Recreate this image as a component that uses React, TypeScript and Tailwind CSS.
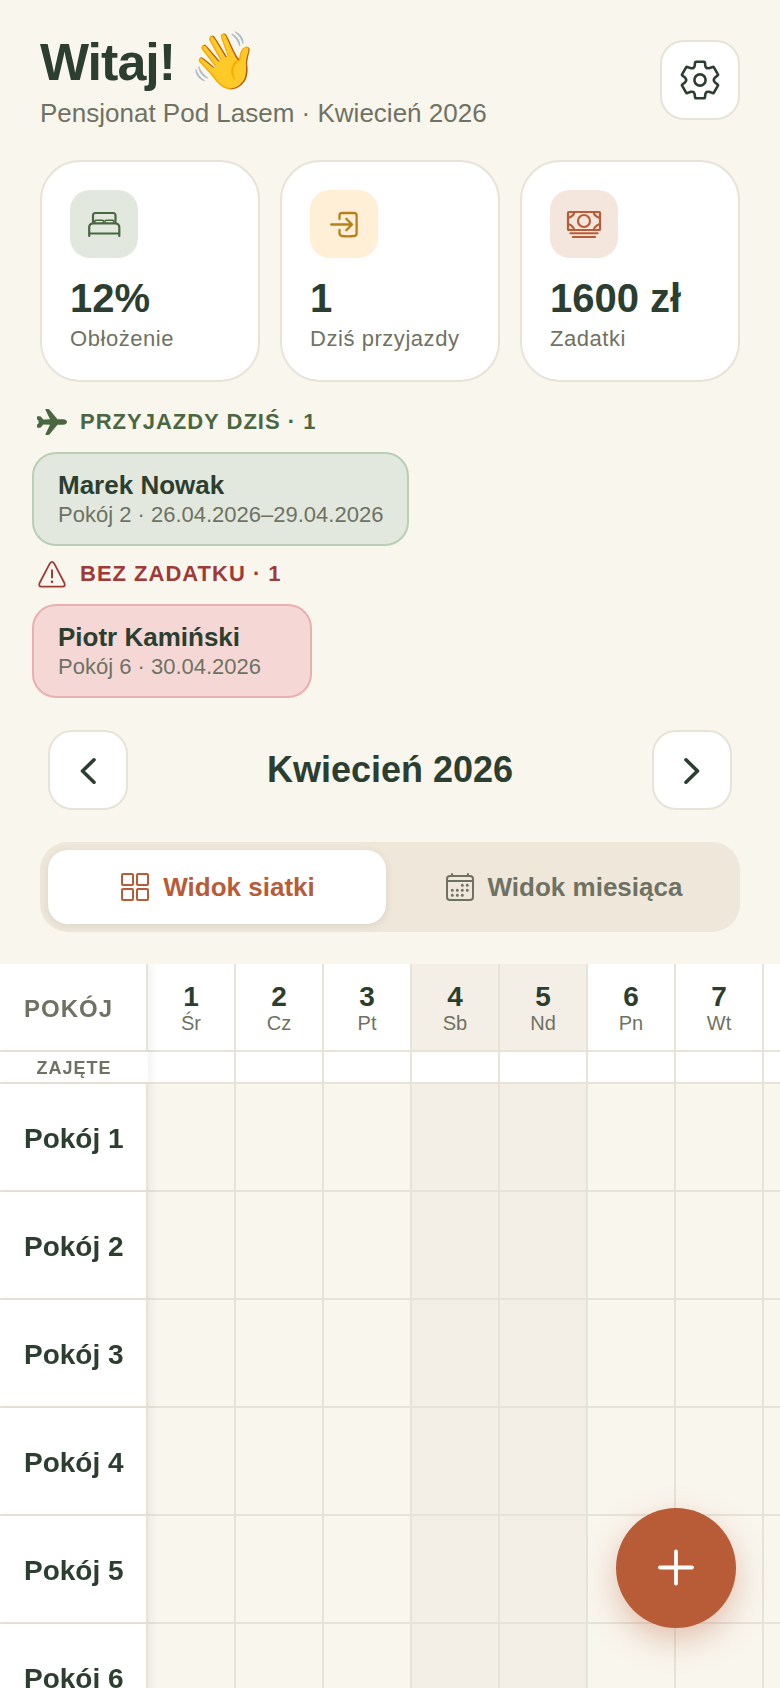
import { useState } from 'react'
import type { ReactNode } from 'react'

const weekdays = ['Nd', 'Pn', 'Wt', 'Śr', 'Cz', 'Pt', 'Sb']

// April 2026 starts on a Wednesday
const days = Array.from({ length: 30 }, (_, i) => {
  const weekday = (i + 3) % 7
  return { number: i + 1, name: weekdays[weekday], weekend: weekday === 0 || weekday === 6 }
})

const rooms = ['Pokój 1', 'Pokój 2', 'Pokój 3', 'Pokój 4', 'Pokój 5', 'Pokój 6']

function GearIcon() {
  return (
    <svg viewBox="-20 -20 40 40" className="size-10" fill="none" stroke="currentColor" strokeWidth="2.6" strokeLinejoin="round" aria-hidden="true">
      <path d="M-4-18.300H4Q4.800-18.300 4.900-17.500L5.400-14Q6-11.200 9-11.800L12.700-13Q13.500-13.300 13.900-12.600L17.900-5.700Q18.300-5 17.600-4.500L14.800-2.200Q12.800 0 14.800 2.200L17.600 4.500Q18.300 5 17.900 5.700L13.900 12.600Q13.500 13.300 12.700 13L9 11.800Q6 11.200 5.400 14L4.900 17.500Q4.800 18.300 4 18.300H-4Q-4.800 18.300-4.900 17.500L-5.400 14Q-6 11.200-9 11.800L-12.700 13Q-13.500 13.300-13.900 12.600L-17.900 5.700Q-18.300 5-17.600 4.500L-14.800 2.200Q-12.800 0-14.800-2.200L-17.600-4.500Q-18.300-5-17.900-5.700L-13.900-12.600Q-13.500-13.300-12.700-13L-9-11.800Q-6-11.200-5.400-14L-4.900-17.500Q-4.800-18.300-4-18.300Z" />
      <circle r="5.600" />
    </svg>
  )
}

function BedIcon() {
  return (
    <svg viewBox="0 0 68 68" className="size-full" fill="none" stroke="currentColor" strokeWidth="2.200" strokeLinecap="round" strokeLinejoin="round" aria-hidden="true">
      <path d="M23 33V25.500Q23 23 25.500 23H43Q45.500 23 45.500 25.500V33" />
      <path d="M19.200 46V37.500Q19.200 33.500 23.200 33.500H45.300Q49.300 33.500 49.300 37.500V46M19.200 43.500H49.300" />
      <rect x="24.800" y="30.300" width="8.700" height="3" rx="1" strokeWidth="1.600" />
      <rect x="35" y="30.300" width="8.700" height="3" rx="1" strokeWidth="1.600" />
    </svg>
  )
}

function ArrivalIcon() {
  return (
    <svg viewBox="0 0 68 68" className="size-full" fill="none" stroke="currentColor" strokeWidth="2.300" strokeLinecap="round" strokeLinejoin="round" aria-hidden="true">
      <path d="M29.500 29V25.500Q29.500 23 32 23H44Q46.600 23 46.600 25.500V43.500Q46.600 46 44 46 38 46.600 32 46 29.500 45.500 29.500 43V40" />
      <path d="M21.200 34.500H42M36.300 28.800 42 34.500 36.300 40.200" />
    </svg>
  )
}

function CashIcon() {
  return (
    <svg viewBox="0 0 68 68" className="size-full" fill="none" stroke="currentColor" strokeWidth="2.200" strokeLinecap="round" aria-hidden="true">
      <rect x="18" y="22" width="32" height="18" rx="0.800" />
      <circle cx="34" cy="31" r="6" />
      <path d="M24.500 22Q23.500 26.500 18 28M43.500 22Q44.500 26.500 50 28M18 34Q23 35.500 24.500 40M50 34Q45 35.500 43.500 40" />
      <path d="M20.300 43.300H47.700M22.800 47H45.200" strokeWidth="1.900" />
    </svg>
  )
}

function PlaneIcon() {
  return (
    <svg viewBox="0 0 32 32" className="size-8" fill="currentColor" aria-hidden="true">
      <path d="M10 3H12Q13 3 13.600 3.800L21.500 13.200H27Q31 13.700 31 16T27 18.800H21.500L13.600 28.200Q13 29 12 29H10Q9 29 9.400 28.200L14 18.800 7.300 18.600 5 21.300Q4.700 21.700 4 21.700H1.600Q1 21.700 1 21V19Q1 18.400 2.600 17.200V14.800Q1 13.600 1 13V11Q1 10.300 1.600 10.300H4Q4.700 10.300 5 10.700L7.300 13.400 14 13.200 9.400 3.800Q9 3 10 3Z" />
    </svg>
  )
}

function WarningIcon() {
  return (
    <svg viewBox="0 0 32 32" className="size-8" fill="none" stroke="currentColor" strokeWidth="1.800" strokeLinecap="round" strokeLinejoin="round" aria-hidden="true">
      <path d="M14 5.200Q16 2.500 18 5.200L28.400 25Q29.700 28.700 26.500 28.700H5.500Q2.300 28.700 3.600 25Z" />
      <path d="M16 12.200V19.600" strokeWidth="2" />
      <circle cx="16" cy="23.700" r="1.300" fill="currentColor" stroke="none" />
    </svg>
  )
}

function GridIcon() {
  return (
    <svg viewBox="0 0 32 32" className="size-8" fill="none" stroke="currentColor" strokeWidth="2" aria-hidden="true">
      <rect x="3" y="3" width="11" height="11" rx="1" />
      <rect x="18" y="3" width="11" height="11" rx="1" />
      <rect x="3" y="18" width="11" height="11" rx="1" />
      <rect x="18" y="18" width="11" height="11" rx="1" />
    </svg>
  )
}

function CalendarIcon() {
  return (
    <svg viewBox="0 0 32 32" className="size-8" fill="none" stroke="currentColor" strokeWidth="2" strokeLinecap="round" aria-hidden="true">
      <rect x="3" y="5" width="26" height="24" rx="3" />
      <path d="M3 10H29M8 3V5M24 3V5" />
      <path
        d="M18.300 14.300h.01M23.300 14.300h.01M8.300 19.300h.01M13.300 19.300h.01M18.300 19.300h.01M23.300 19.300h.01M8.300 24.300h.01M13.300 24.300h.01M18.300 24.300h.01"
        strokeWidth="3"
      />
    </svg>
  )
}

function ChevronIcon({ direction }: { direction: 'left' | 'right' }) {
  return (
    <svg viewBox="0 0 32 32" className="size-8" fill="none" stroke="currentColor" strokeWidth="3.600" strokeLinecap="round" strokeLinejoin="round" aria-hidden="true">
      <path d={direction === 'left' ? 'M22 5.800 10.500 17 22 28.200' : 'M10 5.800 21.500 17 10 28.200'} />
    </svg>
  )
}

function StatCard({ icon, iconClass, value, label }: { icon: ReactNode; iconClass: string; value: string; label: string }) {
  return (
    <div className="rounded-[40px] border-2 border-[#e7e3d8] bg-white p-7">
      <div className={`size-[68px] rounded-[20px] ${iconClass}`}>{icon}</div>
      <p className="mt-4 text-[40px] leading-12 font-bold whitespace-nowrap">{value}</p>
      <p className="mt-1 text-[22px] leading-[26px] tracking-wide whitespace-nowrap text-[#6f7263]">{label}</p>
    </div>
  )
}

function GuestSection({ icon, title, titleClass, guest, details, chipClass }: {
  icon: ReactNode
  title: string
  titleClass: string
  guest: string
  details: string
  chipClass: string
}) {
  return (
    <section className="flex flex-col items-start gap-3.5">
      <h2 className={`flex h-8 items-center gap-3 pl-1 text-[22px] leading-7 font-bold tracking-[1px] ${titleClass}`}>
        {icon}
        {title}
      </h2>
      <button className={`min-w-[280px] rounded-3xl border-2 px-6 py-4 text-left ${chipClass}`}>
        <span className="block text-[26px] leading-[30px] font-bold">{guest}</span>
        <span className="mt-0.5 block text-[22px] leading-[26px] text-[#6f7263]">{details}</span>
      </button>
    </section>
  )
}

function RoomGrid() {
  const sticky = 'sticky left-0 z-10 w-[148px] border-b-2 border-[#e7e3d8] bg-white shadow-[4px_0_8px_rgba(0,0,0,0.05)]'
  const cell = 'w-[88px] border-r-2 border-b-2 border-[#e7e3d8]'

  return (
    <div className="min-h-0 flex-1 overflow-auto [scrollbar-width:none]">
      <table className="w-max table-fixed border-separate border-spacing-0">
        <thead>
          <tr className="h-[88px]">
            <th scope="col" className={`${sticky} border-r-2 pt-1 pl-6 text-left text-[24px] leading-7 tracking-[1px] text-[#6f7263]`}>
              POKÓJ
            </th>
            {days.map((day) => (
              <th key={day.number} scope="col" className={`${cell} pt-1 ${day.weekend ? 'bg-[#f3eee6]' : 'bg-white'}`}>
                <span className="block text-[28px] leading-7">{day.number}</span>
                <span className="block text-[20px] leading-6 font-normal text-[#6f7263]">{day.name}</span>
              </th>
            ))}
          </tr>
        </thead>
        <tbody>
          <tr className="h-8">
            <th scope="row" className={`${sticky} pt-0.5 text-[18px] leading-5 tracking-[1px] text-[#6f7263]`}>
              ZAJĘTE
            </th>
            {days.map((day) => (
              <td key={day.number} className={`${cell} bg-white`} />
            ))}
          </tr>
          {rooms.map((room) => (
            <tr key={room} className="h-[108px]">
              <th scope="row" className={`${sticky} border-r-2 pt-1 pl-6 text-left text-[28px] leading-8`}>
                {room}
              </th>
              {days.map((day) => (
                <td key={day.number} className={`${cell} ${day.weekend ? 'bg-[#f3eee6]' : ''}`} />
              ))}
            </tr>
          ))}
        </tbody>
      </table>
    </div>
  )
}

export default function App() {
  const [view, setView] = useState('grid')

  const iconButton = 'flex size-20 items-center justify-center rounded-3xl border-2 border-[#e7e3d8] bg-white'
  const tab = 'flex flex-1 items-center justify-center gap-3 rounded-[20px] text-[26px] leading-8 font-bold'
  const activeTab = 'bg-white text-[#b85c38] shadow-[0_2px_8px_rgba(45,59,47,0.1)]'

  return (
    <div className="flex h-screen flex-col overflow-hidden bg-[#f9f6ee] font-['Liberation_Sans',Arial,sans-serif] text-[#2c3e30]">
      <header className="flex items-center justify-between px-10 pt-8">
        <div>
          <h1 className="text-[52px] leading-[60px] font-bold tracking-[-1px]">
            Witaj! <span className="text-[56px] leading-none">👋</span>
          </h1>
          <p className="mt-1.5 text-[26px] leading-[30px] text-[#6f7263]">Pensjonat Pod Lasem · Kwiecień 2026</p>
        </div>
        <button aria-label="Ustawienia" className={iconButton}>
          <GearIcon />
        </button>
      </header>

      <div className="mt-8 grid grid-cols-3 gap-5 px-10">
        <StatCard icon={<BedIcon />} iconClass="bg-[#e2e8de] text-[#4a6741]" value="12%" label="Obłożenie" />
        <StatCard icon={<ArrivalIcon />} iconClass="bg-[#feefd6] text-[#b8801a]" value="1" label="Dziś przyjazdy" />
        <StatCard icon={<CashIcon />} iconClass="bg-[#f4e5dd] text-[#b85c38]" value="1600 zł" label="Zadatki" />
      </div>

      <div className="mt-6 flex flex-col gap-3 px-8">
        <GuestSection
          icon={<PlaneIcon />}
          title="PRZYJAZDY DZIŚ · 1"
          titleClass="text-[#4a6741]"
          guest="Marek Nowak"
          details="Pokój 2 · 26.04.2026–29.04.2026"
          chipClass="border-[#b9ceb5] bg-[#e2e8de]"
        />
        <GuestSection
          icon={<WarningIcon />}
          title="BEZ ZADATKU · 1"
          titleClass="text-[#9e3a38]"
          guest="Piotr Kamiński"
          details="Pokój 6 · 30.04.2026"
          chipClass="border-[#e8b0ae] bg-[#f5d8d6]"
        />
      </div>

      <div className="mt-8 flex items-center justify-between px-12">
        <button aria-label="Poprzedni miesiąc" className={iconButton}>
          <ChevronIcon direction="left" />
        </button>
        <h2 className="text-[36px] leading-10 font-bold">Kwiecień 2026</h2>
        <button aria-label="Następny miesiąc" className={iconButton}>
          <ChevronIcon direction="right" />
        </button>
      </div>

      <div className="mx-10 my-8 flex h-[90px] shrink-0 gap-2 rounded-[28px] bg-[#eee7da] p-2">
        <button aria-pressed={view === 'grid'} onClick={() => setView('grid')} className={`${tab} ${view === 'grid' ? activeTab : 'text-[#6f7263]'}`}>
          <GridIcon />
          Widok siatki
        </button>
        <button aria-pressed={view === 'month'} onClick={() => setView('month')} className={`${tab} ${view === 'month' ? activeTab : 'text-[#6f7263]'}`}>
          <CalendarIcon />
          Widok miesiąca
        </button>
      </div>

      <RoomGrid />

      <button
        aria-label="Dodaj rezerwację"
        className="fixed right-11 bottom-15 z-20 flex size-30 items-center justify-center rounded-full bg-[#b85c38] text-white shadow-[0_12px_32px_rgba(184,92,56,0.35)]"
      >
        <svg viewBox="0 0 40 40" className="size-10" fill="none" stroke="currentColor" strokeWidth="3.800" strokeLinecap="round" aria-hidden="true">
          <path d="M20 3.500V35.500M4 19.500H36" />
        </svg>
      </button>
    </div>
  )
}
